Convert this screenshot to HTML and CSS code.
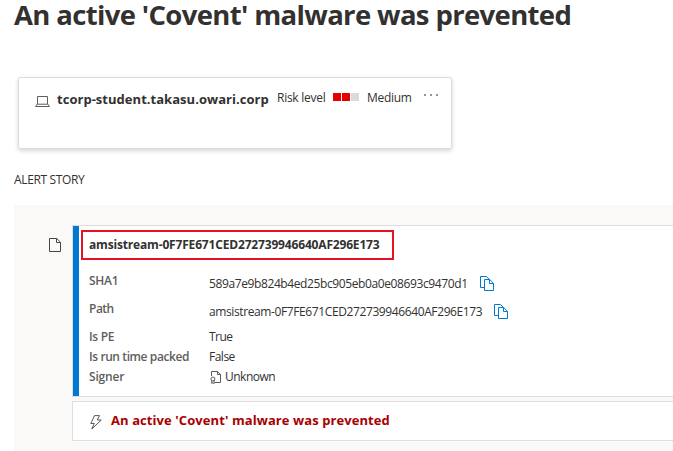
FILE: index.html
```html
<!DOCTYPE html>
<html lang="en">
<head>
<meta charset="utf-8">
<title>Alert</title>
<link rel="stylesheet" href="styles.css">
</head>
<body>
<h1 class="title">An active 'Covent' malware was prevented</h1>

<section class="device">
  <svg class="laptop" width="15" height="11" viewBox="0 0 15 11" fill="none" stroke="#605e5c"><path d="M2.500 8V.5h10V8M.6 10.500l1.400-2.300h11l1.400 2.300z"/></svg>
  <span class="host">tcorp-student.takasu.owari.corp</span>
  <span class="risk">Risk level</span>
  <span class="meter"><i class="on"></i><i class="on"></i><i></i></span>
  <span class="level">Medium</span>
  <span class="more"><i></i><i></i><i></i></span>
</section>

<h2 class="section">ALERT STORY</h2>

<main class="story">
  <svg class="file" width="13" height="15" viewBox="0 0 13 15" fill="none" stroke="#484644"><path d="M.5.5h7.300l3.700 3.700v9.300H.5zM7.500.5v4h4"/></svg>
  <div class="panels">
    <article class="entity">
      <header class="name">amsistream-0F7FE671CED272739946640AF296E173</header>
      <dl class="facts">
        <div class="fact tall"><dt>SHA1</dt><dd><span class="value">589a7e9b824b4ed25bc905eb0a0e08693c9470d1</span><svg class="copy" width="14" height="15" viewBox="0 0 14 15" fill="none" stroke="#0078d4"><path d="M4 11.500H.5V.5h6l2.500 2.600M4.500 3.500h5.200l3.800 3.800v7.200h-9zM9.500 3.500v4h4"/></svg></dd></div>
        <div class="fact tall"><dt class="tight">Path</dt><dd><span class="value">amsistream-0F7FE671CED272739946640AF296E173</span><svg class="copy" width="14" height="15" viewBox="0 0 14 15" fill="none" stroke="#0078d4"><path d="M4 11.500H.5V.5h6l2.500 2.600M4.500 3.500h5.200l3.800 3.800v7.200h-9zM9.500 3.500v4h4"/></svg></dd></div>
        <div class="fact"><dt>Is PE</dt><dd class="tight">True</dd></div>
        <div class="fact"><dt class="long">Is run time packed</dt><dd class="tight">False</dd></div>
        <div class="fact"><dt class="loose">Signer</dt><dd class="tight"><svg class="cert" width="12" height="13" viewBox="0 0 12 13" fill="none" stroke="#605e5c"><path d="M1.500 5V.5h6l3 3v8H5M7.500.5v3h3M1.700 9.500v3l1.200-.8 1.300.8v-3"/><circle cx="2.900" cy="8" r="2"/></svg>Unknown</dd></div>
      </dl>
    </article>
    <article class="alert">
      <svg class="bolt" width="12" height="15" viewBox="0 0 12 15" fill="none" stroke="#484644" stroke-width=".9" stroke-linejoin="round"><path d="M4.500.6h5L7.300 5h3.900L1.800 14l2.500-5.500H.8z"/></svg>
      <span>An active 'Covent' malware was prevented</span>
    </article>
  </div>
</main>
</body>
</html>
```

FILE: styles.css
```css
* { box-sizing: border-box; }
body { margin: 0; width: 673px; height: 451px; overflow: hidden; background: #fff; color: #323130; font: 12px/16px "Open Sans", "Noto Sans", sans-serif; }
svg { display: block; flex: none; }
.title { margin: 0 0 0 14px; height: 77px; font-size: 27.5px; line-height: 29px; font-weight: 700; letter-spacing: -.65px; white-space: nowrap; }
.device { display: flex; align-items: flex-start; width: 434px; height: 72px; margin-left: 18px; padding: 12px 0 0 16px; border: 1px solid #dcdcdc; border-radius: 2px; box-shadow: 0 2px 4px rgba(0,0,0,.16); white-space: nowrap; }
.laptop { margin-top: 6px; }
.host { width: 220px; margin-left: 7px; padding-top: 1px; font-size: 13px; font-weight: 700; letter-spacing: .03px; }
.risk { width: 56px; letter-spacing: -.27px; }
.meter { display: flex; gap: 1px; width: 34px; padding-top: 3px; }
.meter i { width: 8px; height: 8px; background: #dadada; }
.meter .on { background: #e60000; }
.level { width: 57px; letter-spacing: -.3px; }
.more { display: flex; gap: 4px; padding-top: 4px; }
.more i { width: 2px; height: 2px; background: #707070; border-radius: 1px; }
.section { margin: 22px 0 0 14px; height: 34px; font-size: 12px; line-height: 17px; font-weight: 400; letter-spacing: -.35px; }
.story { display: flex; height: 246px; margin-left: 14px; padding-top: 20px; background: #faf9f8; }
.file { margin: 13px 10px 0 35px; }
.panels { flex: 1; }
.entity { height: 172px; border: solid #dedede; border-width: 1px 0 1px 1px; background: #fff; box-shadow: inset 6px 0 #0078d4; padding: 4px 0 0 8px; }
.name { width: 313px; height: 30px; padding-left: 6px; border: 2px solid #e81123; line-height: 26px; font-weight: 700; letter-spacing: -.17px; white-space: nowrap; }
.facts { margin: 12px 0 0 8px; }
.fact { display: flex; height: 20px; line-height: 18px; }
.fact.tall { height: 28px; }
.fact dt { width: 120px; font-weight: 600; color: #605e5c; letter-spacing: -.3px; }
.fact dd { display: flex; margin: 0; white-space: nowrap; }
.fact .tight { letter-spacing: -.5px; }
.fact .long { letter-spacing: -.41px; }
.fact .loose { letter-spacing: -.2px; }
.value { letter-spacing: -.39px; }
.tall dd { padding-top: 3px; }
.copy { margin: 1px 0 0 12px; }
.cert { margin: 3px 3px 0 1px; }
.alert { display: flex; height: 40px; margin-top: 4px; padding: 10px 0 0 17px; border: 1px solid #dedede; border-right: 0; background: #fff; color: #a80000; font-size: 13px; font-weight: 700; letter-spacing: .08px; }
.bolt { margin: 3px 9px 0 0; }
```
